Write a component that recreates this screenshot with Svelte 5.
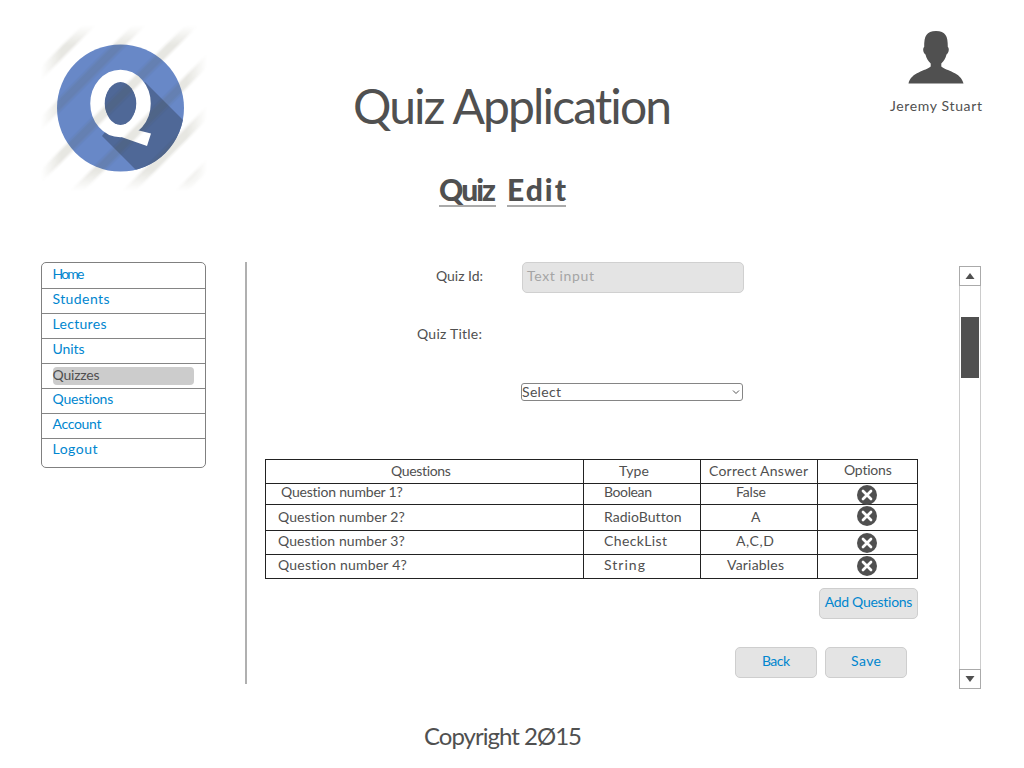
<script>
  const menu = [
    ['Home', 32], ['Students', 57], ['Lectures', 54], ['Units', 32],
    ['Quizzes', 47], ['Questions', 61], ['Account', 49], ['Logout', 45]
  ];
  const rows = [
    { h: 21, lift: 4, q: 'Question number 1?', qw: 122, qx: 15, t: 'Boolean', tw: 48, a: 'False', aw: 30, ax: 35, iy: 1 },
    { h: 26, lift: 1, q: 'Question number 2?', qw: 127, qx: 12, t: 'RadioButton', tw: 77, a: 'A', aw: 8, ax: 50, iy: 1 },
    { h: 24, lift: 4, q: 'Question number 3?', qw: 127, qx: 12, t: 'CheckList', tw: 63, a: 'A,C,D', aw: 38, ax: 35, iy: 2 },
    { h: 24, lift: 4, q: 'Question number 4?', qw: 129, qx: 12, t: 'String', tw: 41, a: 'Variables', aw: 57, ax: 26, iy: 1 }
  ];

  // Spreads the letters of a label so that it fills the given width.
  function fit(node, width) {
    const n = node.textContent.length;
    const natural = node.getBoundingClientRect().width;
    if (n > 1) {
      const gap = (width - natural) / (n - 1);
      node.style.letterSpacing = gap + 'px';
      node.style.marginRight = -gap + 'px';
    }
  }
</script>

{#snippet label(text, width)}<span class="fit" use:fit={width}>{text}</span>{/snippet}

<div class="page">
  <header>
    <svg class="logo" viewBox="0 0 166 166">
      <defs>
        <clipPath id="disc"><circle cx="79.500" cy="83" r="63.500" /></clipPath>
        <linearGradient id="fade" x1="0" x2="1" y1="0" y2="0">
          <stop offset="0" stop-color="#000" /><stop offset=".12" stop-color="#fff" />
          <stop offset=".88" stop-color="#fff" /><stop offset="1" stop-color="#000" />
        </linearGradient>
        <linearGradient id="fadeV" x1="0" x2="0" y1="0" y2="1">
          <stop offset="0" stop-color="#000" stop-opacity="1" /><stop offset=".12" stop-color="#000" stop-opacity="0" />
          <stop offset=".88" stop-color="#000" stop-opacity="0" /><stop offset="1" stop-color="#000" stop-opacity="1" />
        </linearGradient>
        <mask id="edges"><rect width="166" height="166" fill="url(#fade)" /><rect width="166" height="166" fill="url(#fadeV)" /></mask>
        <filter id="soft"><feGaussianBlur stdDeviation="1.300" /></filter>
        <filter id="slight"><feGaussianBlur stdDeviation=".7" /></filter>
      </defs>
      <g filter="url(#slight)">
        <circle cx="79.500" cy="83" r="63.500" fill="#6888c7" />
        <g clip-path="url(#disc)">
          <path d="M104 57L160 113L130 180L61 111Z" fill="#4f6797" />
        </g>
        <ellipse cx="79.500" cy="78.500" rx="23" ry="26.500" fill="#4f6797" stroke="#fff" stroke-width="14.500" />
        <path d="M66 108.500Q80 107 90 103.500L110 108.500L106 121L76 110.500Z" fill="#fff" />
        <ellipse cx="79.500" cy="78.500" rx="15.500" ry="21.500" fill="#4f6797" />
      </g>
      <g mask="url(#edges)">
        <g stroke="#54513c" stroke-opacity=".14" stroke-width="9" filter="url(#soft)">
          <path d="M-6 54L54 -6M-6 104L104 -6M-6 157L157 -6M30 172L172 30M82 172L172 82M135 172L172 135" />
        </g>
      </g>
    </svg>
    <div class="titles">
      <h1>{@render label('Quiz Application', 320)}</h1>
      <h2><span class="word">{@render label('Quiz', 57)}</span><span class="word">{@render label('Edit', 59)}</span></h2>
    </div>
    <div class="user">
      <svg width="56" height="54" viewBox="0 0 56 54">
        <path fill="#505050" d="M28 1C18.500 1 16 6 16.200 17C14.500 18 15 23 17.500 24.500C18.500 28.500 20 31 22.700 33.500V36.500C18 41 3 42 .5 53.500H55.500C53 42 38 41 33.300 36.500V33.500C36 31 37.500 28.500 38.500 24.500C41 23 41.500 18 39.800 17C40 6 37.500 1 28 1Z" />
      </svg>
      <div class="name">{@render label('Jeremy Stuart', 92)}</div>
    </div>
  </header>

  <main>
    <nav>
      {#each menu as [text, width]}
        <a class:active={text === 'Quizzes'}><span class="pill">{@render label(text, width)}</span></a>
      {/each}
    </nav>

    <section>
      <div class="form">
        <div class="caption">{@render label('Quiz Id:', 47)}</div>
        <div class="input">{@render label('Text input', 67)}</div>
        <div class="caption second">{@render label('Quiz Title:', 65)}</div>
      </div>
      <div class="select">
        {@render label('Select', 39)}
        <svg width="8" height="6" viewBox="0 0 8 6"><path d="M1 1.500L4 4.500L7 1.500" fill="none" stroke="#555" /></svg>
      </div>

      <div class="table">
        <div class="row" style="height:24px">
          <div class="cell" style="padding:0 0 1px 125px">{@render label('Questions', 60)}</div>
          <div class="cell" style="padding:0 0 1px 35px">{@render label('Type', 30)}</div>
          <div class="cell" style="padding:0 0 2px 8px">{@render label('Correct Answer', 99)}</div>
          <div class="cell" style="padding:0 0 3px 26px">{@render label('Options', 48)}</div>
        </div>
        {#each rows as r}
          <div class="row" style="height:{r.h}px">
            <div class="cell" style="padding:0 0 {r.lift}px {r.qx}px">{@render label(r.q, r.qw)}</div>
            <div class="cell" style="padding:0 0 {r.lift}px 20px">{@render label(r.t, r.tw)}</div>
            <div class="cell" style="padding:0 0 {r.lift}px {r.ax}px">{@render label(r.a, r.aw)}</div>
            <div class="cell icon" style="padding-top:{r.iy}px">
              <svg width="20" height="20" viewBox="0 0 20 20"><circle cx="10" cy="10" r="10" fill="#505050" /><path d="M6 6L14 14M14 6L6 14" stroke="#fff" stroke-width="2.700" stroke-linecap="round" /></svg>
            </div>
          </div>
        {/each}
      </div>

      <button class="add">{@render label('Add Questions', 88)}</button>
      <div class="actions">
        <button>{@render label('Back', 28)}</button>
        <button>{@render label('Save', 30)}</button>
      </div>
    </section>

    <div class="scroll">
      <div class="end"><svg width="10" height="6" viewBox="0 0 10 6"><path d="M5 0L9.500 6H.5Z" fill="#505050" /></svg></div>
      <div class="track"><div class="thumb"></div></div>
      <div class="end"><svg width="10" height="6" viewBox="0 0 10 6"><path d="M5 6L9.500 0H.5Z" fill="#505050" /></svg></div>
    </div>
  </main>

  <footer>{@render label('Copyright 2Ø15', 158)}</footer>
</div>

<style>
  :global(body) { background: #fff; }
  .page { box-sizing: border-box; width: 1024px; height: 768px; overflow: hidden; display: flex; flex-direction: column; font: 14px/20px Lato, sans-serif; color: #505050; }
  .page :global(*) { box-sizing: border-box; }
  .fit { display: inline-block; white-space: nowrap; }
  header { height: 262px; flex: none; display: grid; grid-template-columns: 165px 1fr 100px; padding: 25px 39px 0 41px; }
  .logo { width: 166px; height: 166px; }
  .titles { padding-left: 147px; }
  h1 { margin: 0; padding-top: 49px; font-size: 48px; line-height: 64px; font-weight: 400; height: 113px; }
  h2 { margin: 0; padding: 36px 0 0 86px; display: flex; gap: 11px; font-size: 30px; line-height: 30px; font-weight: 900; }
  .word { display: block; height: 33px; border-bottom: 2px solid #aaa; }
  .user { display: flex; flex-direction: column; align-items: center; padding: 5px 0 0 2px; }
  .name { padding-top: 12px; line-height: 20px; }
  main { display: flex; height: 428px; flex: none; }
  nav { width: 165px; height: 206px; margin-left: 40.500px; border: 1px solid #808080; border-radius: 5px; }
  nav a { display: block; height: 25px; padding: 0 11px; border-bottom: 1px solid #858585; color: #0086cf; }
  nav a:first-child { height: 26px; }
  nav a:last-child { border: 0; }
  .pill { display: block; height: 20px; line-height: 20px; }
  nav a:first-child .pill { padding-top: 1px; }
  nav .active { padding-top: 3px; }
  .active .pill { height: 18px; line-height: 15px; background: #ccc; border-radius: 4px; color: #505050; }
  section { width: 673px; height: 422px; margin-left: 39.500px; padding-left: 19px; border-left: 2px solid #b0b0b0; display: flex; flex-direction: column; }
  .form { display: grid; grid-template-columns: 217px 222px; column-gap: 39px; height: 121px; align-content: start; }
  .caption { text-align: right; padding-top: 4px; }
  .caption:first-child { padding-right: 0; }
  .second { padding-top: 31px; padding-right: 1px; }
  .input { height: 31px; border: 1px solid #d0d0d0; background: #e4e4e4; border-radius: 5px; color: #a5a5a5; padding: 3px 4px; }
  .select { width: 222px; height: 18px; margin-left: 255px; border: 1px solid #858585; border-radius: 3px; display: flex; align-items: center; justify-content: space-between; padding-right: 2px; line-height: 16px; }
  .table { width: 653px; margin: 58px 0 0 -1px; border: solid #222; border-width: 1px 0 0 1px; }
  .row { display: grid; grid-template-columns: 318px 117px 117px 100px; }
  .cell { border: solid #222; border-width: 0 1px 1px 0; display: flex; align-items: center; min-width: 0; min-height: 0; }
  .icon { align-items: flex-start; padding-left: 39px; }
  .icon svg { flex: none; }
  button { width: 82px; height: 31px; padding: 0 0 3px; border: 1px solid #cecece; border-radius: 5px; background: #e4e4e4; color: #0086cf; font: 14px/20px Lato, sans-serif; }
  .add { width: 99px; margin: 9px 0 0 553px; }
  .actions { display: flex; gap: 8px; margin: 28px 0 0 469px; }
  .scroll { width: 22px; height: 423px; margin: 4px 0 0 41px; display: flex; flex-direction: column; }
  .end { height: 20px; border: 1px solid #aaa; display: flex; align-items: center; justify-content: center; }
  .track { flex: 1; border: solid #ccc; border-width: 0 1px; padding-top: 31px; }
  .thumb { height: 61px; width: 18px; margin: 0 1px; background: #505050; }
  footer { padding: 30px 0 0 424px; font-size: 24px; line-height: 32px; }
</style>
